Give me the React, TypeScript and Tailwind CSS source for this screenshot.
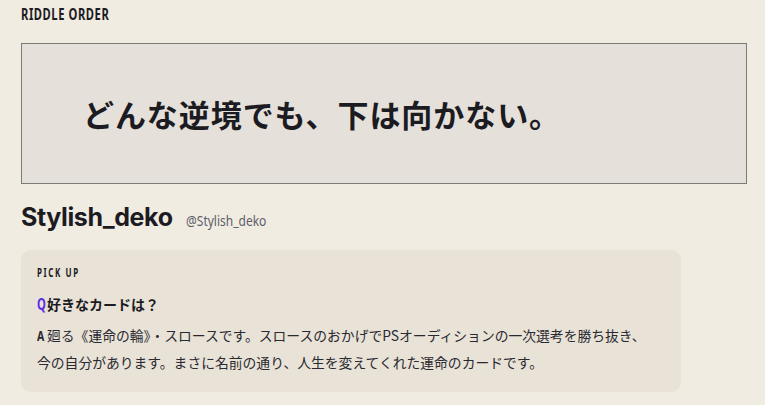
export default function App() {
  const cond = { fontFamily: '"Noto Sans", "Liberation Sans", sans-serif' };
  return (
    <div className="w-[765px] h-[405px] overflow-hidden bg-[#f0ece2] text-[#1c1b22]" style={{ fontFamily: '"Noto Sans CJK JP", "Noto Sans", sans-serif' }}>
      <div className="px-[21px] pt-[5px]">
        <div className="h-[19px] text-[16px] font-bold tracking-[0.05em] leading-[19px] whitespace-nowrap" style={cond}>
          <span className="inline-block origin-left scale-x-[0.7]">RIDDLE ORDER</span>
        </div>
        <div className="mt-[19px] h-[141px] w-[726px] border border-[#7d7b78] bg-[#e5e1da] flex items-center pl-[61px]">
          <p className="text-[31px] font-bold leading-none tracking-[0.03em]">どんな逆境でも、下は向かない。</p>
        </div>
        <div className="mt-[17px] flex items-baseline gap-[13px]">
          <h2 className="text-[25px] font-bold leading-[32px] tracking-[-0.015em]" style={{ fontFamily: '"Inter", "Noto Sans", sans-serif' }}>
            Stylish_deko
          </h2>
          <span className="inline-block origin-left scale-x-[0.8] text-[15px] text-[#5e5d6a] whitespace-nowrap" style={cond}>@Stylish_deko</span>
        </div>
        <div className="mt-[17px] w-[660px] rounded-[10px] bg-[#e8e2d7] px-[16px] pt-[16px] pb-[16px]">
          <div className="h-[14px] text-[12.5px] font-bold tracking-[0.2em] leading-[14px] whitespace-nowrap" style={cond}>
            <span className="inline-block origin-left scale-x-[0.64]">PICK UP</span>
          </div>
          <div className="mt-[13px] flex items-center text-[14px] font-bold leading-[22px]">
            <span className="inline-block w-[10px] text-[16px] text-[#5a2de8]" style={cond}>
              <span className="inline-block origin-left scale-x-[0.7]">Q</span>
            </span>
            <span>好きなカードは？</span>
          </div>
          <p className="mt-[7px] text-[13.8px] leading-[27px] text-[#2a2930]">
            <span className="inline-block w-[10px] font-bold text-[14px]" style={cond}>
              <span className="inline-block origin-left scale-x-[0.75]">A</span>
            </span>
            廻る《運命の輪》・スロースです。スロースのおかげでPSオーディションの一次選考を勝ち抜き、
            <br />
            今の自分があります。まさに名前の通り、人生を変えてくれた運命のカードです。
          </p>
        </div>
      </div>
    </div>
  );
}
